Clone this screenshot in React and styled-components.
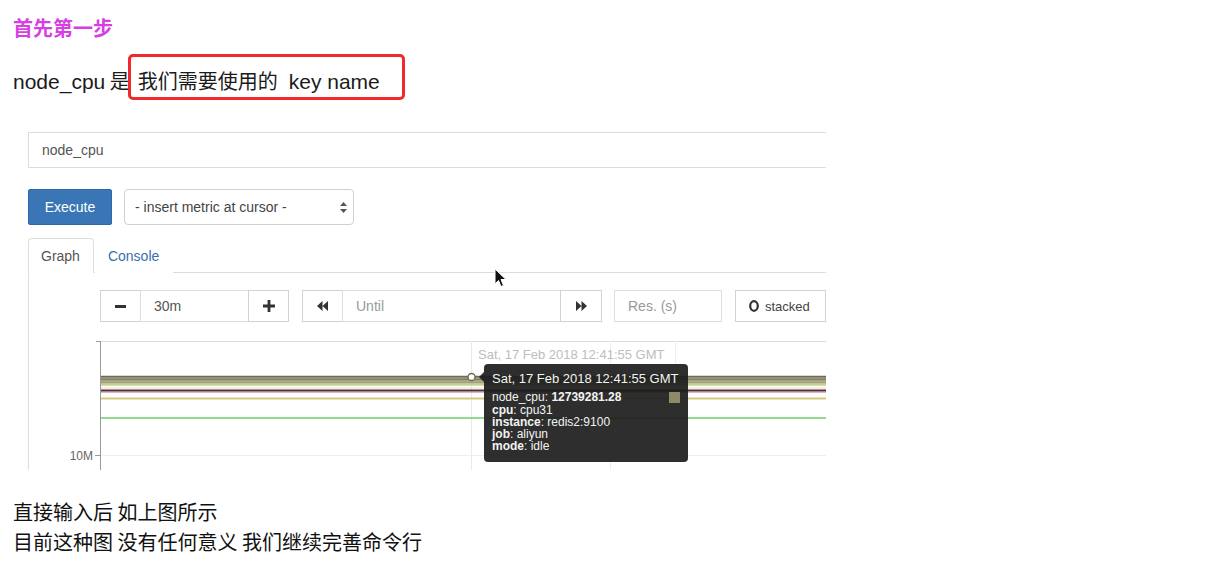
import React from 'react';
import styled, { createGlobalStyle } from 'styled-components';

const GlobalStyle = createGlobalStyle`
  body {
    margin: 0;
    background: #ffffff;
    font-family: "Liberation Sans", "Noto Sans CJK SC", sans-serif;
  }
`;

const series = [
  { y: 35.5, color: '#6e6a54', w: 1.6 },
  { y: 37, color: '#7a765c', w: 1.6 },
  { y: 38.5, color: '#858260', w: 1.6 },
  { y: 40, color: '#939168', w: 1.6 },
  { y: 41.5, color: '#a2a276', w: 1.6 },
  { y: 43, color: '#b3bc8a', w: 1.4 },
  { y: 44.5, color: '#cddba4', w: 1.2 },
  { y: 47, color: '#e8e2b6', w: 1.2 },
  { y: 49.5, color: '#5a2b3b', w: 1.8 },
  { y: 51, color: '#a07888', w: 1 },
  { y: 57.5, color: '#d5ca7c', w: 1.8 },
  { y: 77, color: '#6fcf6a', w: 1.6 },
];

const App = () => {
  return (
    <Page>
      <GlobalStyle />
      <Heading>首先第一步</Heading>
      <KeyLine>
        <Plain><Latin>node_cpu</Latin> 是</Plain>
        <Marked>我们需要使用的<Latin $space={11}>key name</Latin></Marked>
      </KeyLine>

      <Shot>
        <QueryInput>node_cpu</QueryInput>
        <ActionRow>
          <ExecuteButton>Execute</ExecuteButton>
          <MetricSelect>
            <span>- insert metric at cursor -</span>
            <svg width="7" height="11" viewBox="0 0 7 11">
              <path d="M3.5 0 L7 4 L0 4Z M3.5 11 L7 7 L0 7Z" fill="#555" />
            </svg>
          </MetricSelect>
        </ActionRow>

        <TabBar>
          <Tab $active>Graph</Tab>
          <Tab>Console</Tab>
        </TabBar>

        <Pane>
          <Controls>
            <Group>
              <IconButton $w={41}>
                <svg width="11" height="3" viewBox="0 0 11 3"><rect width="11" height="3" fill="#333" /></svg>
              </IconButton>
              <Field $w={109}>30m</Field>
              <IconButton $w={41}>
                <svg width="12" height="12" viewBox="0 0 12 12"><path d="M4.6 0h2.8v4.6H12v2.8H7.4V12H4.6V7.4H0V4.6h4.6z" fill="#333" /></svg>
              </IconButton>
            </Group>
            <Group $gap={13}>
              <IconButton $w={41}>
                <svg width="11" height="10" viewBox="0 0 11 10"><path d="M5.5 0 L0 5 L5.5 10Z M11 0 L5.5 5 L11 10Z" fill="#333" /></svg>
              </IconButton>
              <Field $w={219} $placeholder>Until</Field>
              <IconButton $w={42}>
                <svg width="11" height="10" viewBox="0 0 11 10"><path d="M0 0 L5.5 5 L0 10Z M5.5 0 L11 5 L5.5 10Z" fill="#333" /></svg>
              </IconButton>
            </Group>
            <Group $gap={12}>
              <Field $w={108} $placeholder>Res. (s)</Field>
            </Group>
            <Group $gap={13}>
              <StackedButton>
                <svg width="10" height="12" viewBox="0 0 10 12">
                  <ellipse cx="5" cy="6" rx="3.8" ry="4.8" fill="none" stroke="#333" strokeWidth="2.2" />
                </svg>
                stacked
              </StackedButton>
            </Group>
          </Controls>

          <ChartWrap>
            <svg width="766" height="129" viewBox="0 0 766 129">
              <line x1="40" y1="0.5" x2="766" y2="0.5" stroke="#dcdcdc" />
              <line x1="40" y1="114.5" x2="766" y2="114.5" stroke="#eeeeee" />
              <line x1="411.5" y1="0" x2="411.5" y2="129" stroke="#eaeaea" />
              <line x1="550.5" y1="0" x2="550.5" y2="129" stroke="#eeeeee" />
              <line x1="615.5" y1="0" x2="615.5" y2="23" stroke="#eeeeee" />
              {series.map((s, i) => (
                <line key={i} x1="41" y1={s.y} x2="766" y2={s.y} stroke={s.color} strokeWidth={s.w} />
              ))}
              <line x1="40.5" y1="0" x2="40.5" y2="129" stroke="#999" />
              <line x1="36" y1="0.5" x2="40" y2="0.5" stroke="#999" />
              <line x1="35" y1="114.5" x2="40" y2="114.5" stroke="#999" />
              <text x="33" y="118.5" textAnchor="end" fontSize="12" fill="#666" fontFamily="Liberation Sans, sans-serif">10M</text>
              <circle cx="411.5" cy="36" r="3.5" fill="#fff" stroke="#6b6750" strokeWidth="1.3" />
            </svg>
            <HoverDate>Sat, 17 Feb 2018 12:41:55 GMT</HoverDate>
            <Tooltip>
              <TipTitle>Sat, 17 Feb 2018 12:41:55 GMT</TipTitle>
              <TipValue>
                <span>node_cpu: <b>12739281.28</b></span>
                <Swatch />
              </TipValue>
              <TipLine><b>cpu</b>: cpu31</TipLine>
              <TipLine><b>instance</b>: redis2:9100</TipLine>
              <TipLine><b>job</b>: aliyun</TipLine>
              <TipLine><b>mode</b>: idle</TipLine>
            </Tooltip>
          </ChartWrap>
        </Pane>

        <Cursor width="13" height="20" viewBox="0 0 13 20">
          <path d="M1 1 L1 16 L4.5 12.5 L7 18.5 L9.5 17.5 L7 11.5 L12 11.5 Z" fill="#111" stroke="#fff" strokeWidth="1" strokeLinejoin="round" />
        </Cursor>
      </Shot>

      <Notes>
        <Note>直接输入后 如上图所示</Note>
        <Note>目前这种图 没有任何意义 我们继续完善命令行</Note>
      </Notes>
    </Page>
  );
};

const Page = styled.div`
  padding: 14px 0 0 13px;
  height: 570px;
  box-sizing: border-box;
  overflow: hidden;
  color: #1b1b1b;
`;

const Heading = styled.div`
  font-family: "Noto Sans CJK SC", sans-serif;
  font-size: 20px;
  line-height: 28px;
  font-weight: 700;
  color: #d640e2;
`;

const KeyLine = styled.div`
  display: flex;
  align-items: flex-end;
  margin-top: 12px;
  font-size: 20px;
  line-height: 28px;
  font-family: "Noto Sans CJK SC", sans-serif;
`;

const Latin = styled.span`
  font-family: "Liberation Sans", Arial, sans-serif;
  font-size: 21px;
  margin-left: ${(p) => p.$space || 0}px;
`;

const Plain = styled.span`
  padding-bottom: 4px;
  white-space: pre;
`;

const Marked = styled.span`
  margin-left: -2px;
  padding: 10px 22px 1px 7px;
  border: 3px solid #f02a2a;
  border-radius: 5px;
`;

const Shot = styled.div`
  position: relative;
  margin: 32px 0 0 15px;
  width: 798px;
  overflow: hidden;
  font-family: "Liberation Sans", Arial, sans-serif;
  font-size: 14px;
  color: #555;
`;

const QueryInput = styled.div`
  display: flex;
  align-items: center;
  width: 830px;
  height: 36px;
  box-sizing: border-box;
  padding: 0 13px;
  border: 1px solid #dcdcdc;
  border-right: none;
`;

const ActionRow = styled.div`
  display: flex;
  margin-top: 21px;
  gap: 12px;
`;

const ExecuteButton = styled.div`
  display: flex;
  align-items: center;
  justify-content: center;
  width: 84px;
  height: 36px;
  box-sizing: border-box;
  background: #3a76b5;
  border: 1px solid #2f68a3;
  border-radius: 2px;
  color: #fff;
`;

const MetricSelect = styled.div`
  display: flex;
  align-items: center;
  justify-content: space-between;
  width: 230px;
  height: 36px;
  box-sizing: border-box;
  padding: 0 6px 0 10px;
  border: 1px solid #d0d0d0;
  border-radius: 4px;
  color: #444;
`;

const TabBar = styled.div`
  display: flex;
  margin-top: 13px;
  height: 35px;
  box-sizing: border-box;
  border-bottom: 1px solid #dddddd;
`;

const Tab = styled.div`
  display: flex;
  align-items: center;
  height: 35px;
  box-sizing: border-box;
  padding: 0 13px 0 12px;
  margin-right: 1px;
  border: 1px solid ${(p) => (p.$active ? '#dddddd' : 'transparent')};
  border-bottom-color: ${(p) => (p.$active ? '#fff' : 'transparent')};
  border-radius: 4px 4px 0 0;
  background: #fff;
  color: ${(p) => (p.$active ? '#555' : '#3b6fae')};
`;

const Pane = styled.div`
  border-left: 1px solid #dddddd;
  padding-top: 17px;
`;

const Controls = styled.div`
  display: flex;
  margin-left: 71px;
  height: 32px;
`;

const Group = styled.div`
  display: flex;
  margin-left: ${(p) => p.$gap || 0}px;

  & > * + * {
    margin-left: -1px;
  }
`;

const IconButton = styled.div`
  display: flex;
  align-items: center;
  justify-content: center;
  width: ${(p) => p.$w}px;
  height: 32px;
  box-sizing: border-box;
  border: 1px solid #d2d2d2;
  background: #fff;
`;

const Field = styled.div`
  display: flex;
  align-items: center;
  width: ${(p) => p.$w}px;
  height: 32px;
  box-sizing: border-box;
  padding-left: 13px;
  border: 1px solid #dedede;
  color: ${(p) => (p.$placeholder ? '#999' : '#555')};
`;

const StackedButton = styled.div`
  display: flex;
  align-items: center;
  gap: 6px;
  width: 91px;
  height: 32px;
  box-sizing: border-box;
  padding-left: 13px;
  border: 1px solid #d2d2d2;
  font-size: 13px;
  color: #444;
`;

const ChartWrap = styled.div`
  position: relative;
  margin: 19px 0 0 31px;
  height: 129px;

  svg {
    display: block;
  }
`;

const HoverDate = styled.div`
  position: absolute;
  left: 418px;
  top: 6px;
  font-size: 13px;
  color: #bdbdbd;
  white-space: nowrap;
`;

const Tooltip = styled.div`
  position: absolute;
  left: 424px;
  top: 23px;
  width: 204px;
  height: 98px;
  box-sizing: border-box;
  padding: 7px 8px 0 8px;
  background: rgba(28, 28, 28, 0.92);
  border-radius: 4px;
  color: #f2f2f2;
  font-size: 12px;

  &::before {
    content: '';
    position: absolute;
    left: -5px;
    top: 8px;
    border-style: solid;
    border-width: 5px 5px 5px 0;
    border-color: transparent rgba(28, 28, 28, 0.92) transparent transparent;
  }
`;

const TipTitle = styled.div`
  font-size: 13px;
  line-height: 16px;
  white-space: nowrap;
`;

const TipValue = styled.div`
  display: flex;
  align-items: center;
  justify-content: space-between;
  margin-top: 3px;
  line-height: 14px;
`;

const Swatch = styled.div`
  width: 11px;
  height: 11px;
  background: #8e8a64;
`;

const TipLine = styled.div`
  line-height: 12px;
`;

const Cursor = styled.svg`
  position: absolute;
  left: 466px;
  top: 136px;
`;

const Notes = styled.div`
  margin-top: 27px;
`;

const Note = styled.div`
  font-family: "Noto Sans CJK SC", sans-serif;
  font-size: 20px;
  line-height: 30px;
  font-weight: 400;
  color: #111;
`;

export default App;
